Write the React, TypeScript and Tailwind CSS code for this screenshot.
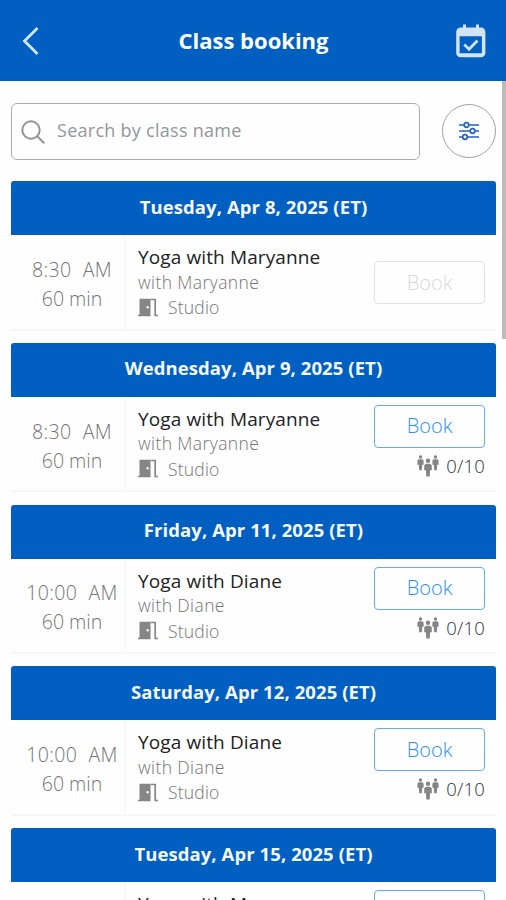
interface ClassItem {
  date: string;
  time: string;
  period: string;
  teacher: string;
  full?: string;
}

const classes: ClassItem[] = [
  { date: 'Tuesday, Apr 8, 2025 (ET)', time: '8:30', period: 'AM', teacher: 'Maryanne' },
  { date: 'Wednesday, Apr 9, 2025 (ET)', time: '8:30', period: 'AM', teacher: 'Maryanne', full: '0/10' },
  { date: 'Friday, Apr 11, 2025 (ET)', time: '10:00', period: 'AM', teacher: 'Diane', full: '0/10' },
  { date: 'Saturday, Apr 12, 2025 (ET)', time: '10:00', period: 'AM', teacher: 'Diane', full: '0/10' },
  { date: 'Tuesday, Apr 15, 2025 (ET)', time: '8:30', period: 'AM', teacher: 'Maryanne', full: '0/10' },
];

function CalendarIcon() {
  return (
    <svg width="30" height="34" viewBox="0 0 30 34" fill="none">
      <path
        fillRule="evenodd"
        fill="#d3e3fa"
        d="M7 0.500h3v3h10v-3h3v3h2a4.400 4.400 0 0 1 4.400 4.400v21a4.400 4.400 0 0 1-4.400 4.400H4.600A4.400 4.400 0 0 1 .2 28.900V7.900A4.400 4.400 0 0 1 4.600 3.500h2.400zM3.600 12.200v17h22.300V12.200z"
      />
      <path d="M8.300 20.600l4.700 4.600 8.500-8.700" stroke="#d3e3fa" strokeWidth="2.800" />
    </svg>
  );
}

function FilterIcon() {
  return (
    <svg width="20" height="20" viewBox="0 0 20 20" fill="none" stroke="#2560be" strokeWidth="1.700">
      <path d="M0 4h5M10 4h10M0 10h11M16 10h4M0 16h3.500M8.500 16H20" />
      <circle cx="7.500" cy="4" r="2.300" />
      <circle cx="13.500" cy="10" r="2.300" />
      <circle cx="6" cy="16" r="2.300" />
    </svg>
  );
}

function DoorIcon() {
  return (
    <svg width="20" height="19" viewBox="0 0 20 19">
      <path fillRule="evenodd" fill="#868686" d="M1.500 0.700h11v17.600H0v-1.500h1.500zM9.600 8.100a1.200 1.200 0 1 0 0 2.400 1.200 1.200 0 0 0 0-2.400z" />
      <path fill="none" stroke="#868686" strokeWidth="1.700" d="M12.500 1.500h4.700v16h2.800" />
    </svg>
  );
}

function PeopleIcon() {
  return (
    <svg width="22" height="22" viewBox="0 0 22 22" fill="#858585">
      <circle cx="3.500" cy="2" r="1.700" />
      <path d="M1.700 4.300h3.600l1.300 1.200v4.300H5.200L4.800 15.300H2.200L1.800 9.800H.4V5.500z" />
      <circle cx="18.500" cy="2" r="1.700" />
      <path d="M16.700 4.300h3.600l1.300 1.200v4.300h-1.400l-.4 5.500h-2.600l-.4-5.500h-1.400V5.500z" />
      <circle cx="11" cy="5.700" r="2.200" />
      <path d="M9 8.800h4l1.800 1.400v5h-1.700l-.4 6.300H9.300l-.4-6.300H7.200v-5z" />
    </svg>
  );
}

function ClassCard({ item }: { item: ClassItem }) {
  return (
    <section className="h-[161.75px] shrink-0">
      <h2 className="flex h-[54px] items-center justify-center rounded-t-[3px] bg-[#005fc1] pb-[3px] text-[18.5px] font-bold tracking-[0.08px] text-[#f4f8ff]">
        {item.date}
      </h2>
      <div className="flex h-[95.5px] border-b-2 border-[#f7f7f7]">
        <div className="flex w-[115px] shrink-0 flex-col items-center justify-center border-r-2 border-[#f9f9f9] pl-[9px] pt-1 text-[19.5px] leading-[29px] font-light text-[#747474]">
          <div className="flex gap-[11px] tracking-[0.4px]">
            <span>{item.time}</span>
            <span>{item.period}</span>
          </div>
          <span>60 min</span>
        </div>
        <div className="flex flex-1 flex-col pl-3 pt-2">
          <h3 className="text-[19px] leading-7 tracking-[0.12px] text-[#222]">Yoga with {item.teacher}</h3>
          <p className="-mt-[1.500px] text-[17.5px] leading-6 font-light tracking-[0.4px] text-[#747474]">with {item.teacher}</p>
          <div className="mt-[1.500px] flex items-center gap-[10px] text-[17.5px] leading-6 font-light tracking-[0.2px] text-[#747474]">
            <DoorIcon />
            <span>Studio</span>
          </div>
        </div>
        {item.full ? (
          <div className="mr-[11px] flex w-[111px] shrink-0 flex-col items-end pt-[8px]">
            <button className="h-[43px] w-full rounded-[4px] border-[1.5px] border-[#63aaf0] text-[20px] font-light text-[#2c90ee]">
              Book
            </button>
            <div className="mt-1 flex h-7 items-center gap-[7px] text-[18.5px] font-light tracking-[0.2px] text-[#333]">
              <PeopleIcon />
              <span>{item.full}</span>
            </div>
          </div>
        ) : (
          <div className="mr-[11px] w-[111px] shrink-0 pt-[26px]">
            <button disabled className="h-[43px] w-full rounded-[4px] border-[1.5px] border-[#e2e2e2] text-[20px] font-light text-[#d8d8d8]">
              Book
            </button>
          </div>
        )}
      </div>
    </section>
  );
}

export default function App() {
  return (
    <div className="relative flex h-[900px] w-[506px] flex-col overflow-hidden bg-[#fefefe] font-['Open_Sans',sans-serif]">
      <header className="flex h-[81px] shrink-0 items-center justify-between bg-[#005fc1] pl-[22px] pr-5">
        <svg width="17" height="28" viewBox="0 0 17 28" fill="none" stroke="#d3e9ff" strokeWidth="2.800">
          <path d="M15.500 1L2.500 14l13 13" />
        </svg>
        <h1 className="pl-3 text-[22px] font-bold text-white">Class booking</h1>
        <CalendarIcon />
      </header>

      <div className="flex shrink-0 items-center justify-between pl-[11px] pr-[10px] pt-[22px]">
        <div className="flex h-[57px] w-[409px] items-center rounded-[6px] border-[1.5px] border-[#a9adb0] pl-[9px] text-[18px] tracking-[0.27px] text-[#92979c]">
          <svg className="mr-3" width="24" height="24" viewBox="0 0 24 24" fill="none" stroke="#909498" strokeWidth="2">
            <circle cx="10" cy="10" r="8.700" />
            <path d="M16 16l7.300 7.300" />
          </svg>
          <span className="pb-0.5">Search by class name</span>
        </div>
        <button className="mb-0.5 flex h-[54px] w-[54px] items-center justify-center rounded-full border border-[#a0a3a6]">
          <FilterIcon />
        </button>
      </div>

      <main className="flex flex-col pl-[11px] pr-[10px] pt-[21px]">
        {classes.map((item) => (
          <ClassCard key={item.date} item={item} />
        ))}
      </main>

      <div className="absolute top-[81px] right-0 h-[258px] w-1 bg-[#bbb]" />
    </div>
  );
}
